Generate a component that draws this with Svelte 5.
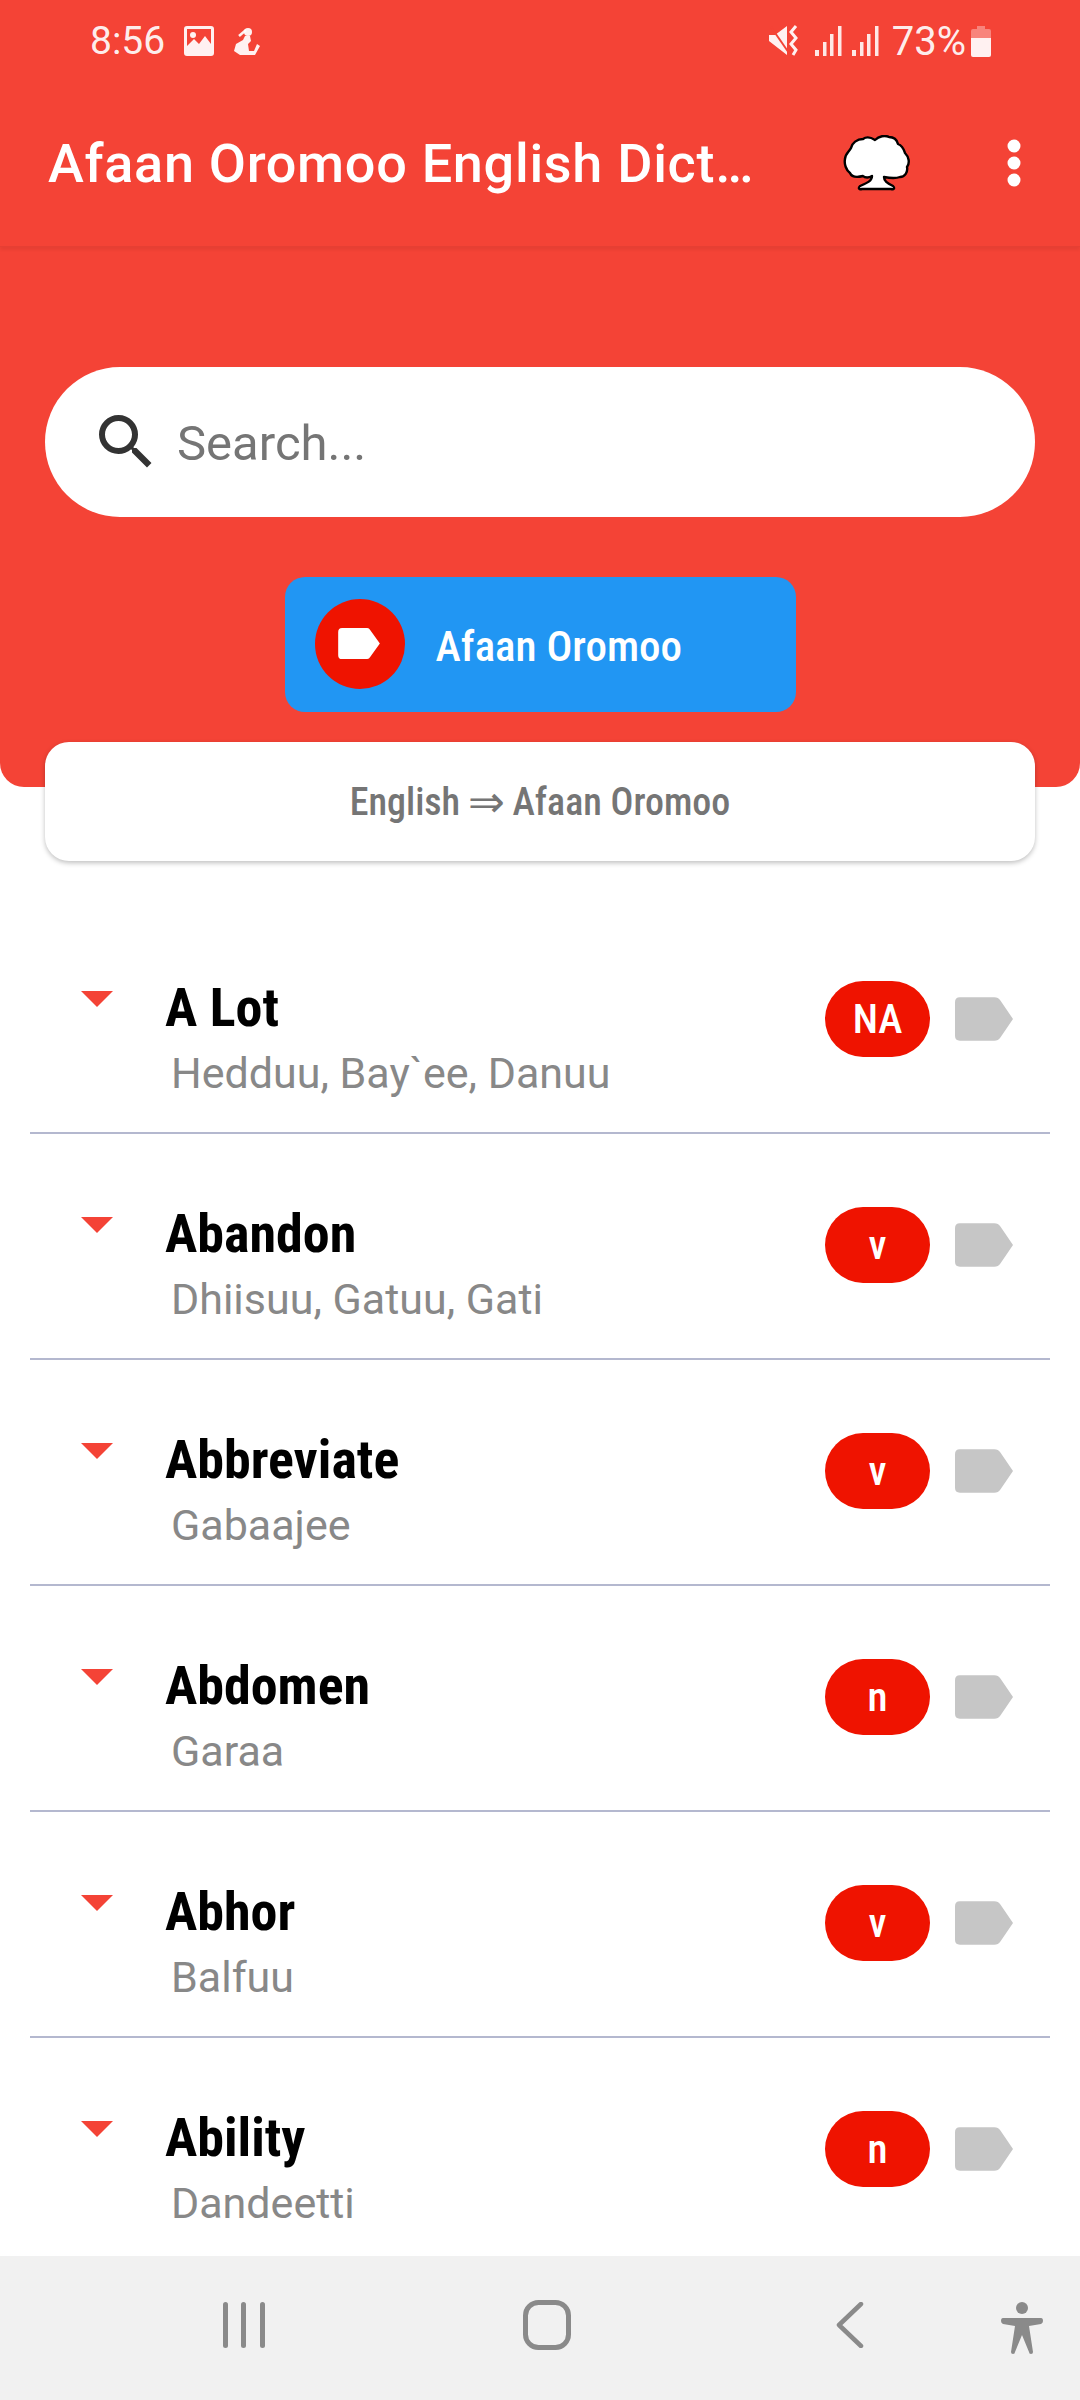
<script>
  const words = [
    { word: 'A Lot', meaning: 'Hedduu, Bay`ee, Danuu', type: 'NA' },
    { word: 'Abandon', meaning: 'Dhiisuu, Gatuu, Gati', type: 'v' },
    { word: 'Abbreviate', meaning: 'Gabaajee', type: 'v' },
    { word: 'Abdomen', meaning: 'Garaa', type: 'n' },
    { word: 'Abhor', meaning: 'Balfuu', type: 'v' },
    { word: 'Ability', meaning: 'Dandeetti', type: 'n' }
  ];
  const tag = 'M5 0H40Q44 0 46 3L59 22L46 41Q44 44 40 44H5Q0 44 0 39V5Q0 0 5 0Z';
</script>

<div class="screen">
  <header class="top">
    <div class="status">
      <div class="status-left">
        <span class="clock">8:56</span>
        <svg class="st-img" viewBox="0 0 30 30">
          <path fill="#fff" fill-opacity=".93" fill-rule="evenodd" d="M3 0H27Q30 0 30 3V27Q30 30 27 30H3Q0 30 0 27V3Q0 0 3 0ZM3 3V20L10 13L15 18L21 10L27 18V3Z"/>
          <circle cx="9" cy="9" r="3" fill="#fff" fill-opacity=".93"/>
        </svg>
        <svg class="st-run" viewBox="0 0 26 28">
          <circle cx="14" cy="5" r="4" fill="#fff" fill-opacity=".93"/>
          <path d="M12 3L5 9" stroke="#fff" stroke-opacity=".93" stroke-width="2.5"/>
          <path fill="#fff" fill-opacity=".93" d="M11 9H16L17 14L14 17L15 24L20 24L23 17L26 19L21 28H6L0 24L2 17L9 13Z"/>
        </svg>
      </div>
      <div class="status-right">
        <svg class="st-mute" viewBox="0 0 32 32">
          <path fill="#fff" fill-opacity=".93" d="M0 10H6L18 1V30L0 16Z"/>
          <path stroke="#f44336" stroke-width="2" d="M2 2L20 28"/>
          <path fill="none" stroke="#fff" stroke-opacity=".93" stroke-width="3" d="M27 1L22 7L27 13L22 19L27 25L24 30"/>
        </svg>
        <svg class="st-sig" viewBox="0 0 28 30">
          <g fill="#fff" fill-opacity=".88"><rect x="0" y="24" width="4" height="6"/><rect x="8" y="16" width="3.5" height="14"/><rect x="15" y="8" width="3.5" height="22"/><rect x="23" y="0" width="3.5" height="30"/></g>
        </svg>
        <svg class="st-sig" viewBox="0 0 28 30">
          <g fill="#fff" fill-opacity=".88"><rect x="0" y="24" width="4" height="6"/><rect x="8" y="16" width="3.5" height="14"/><rect x="15" y="8" width="3.5" height="22"/><rect x="23" y="0" width="3.5" height="30"/></g>
        </svg>
        <span class="pct">73%</span>
        <svg class="st-batt" viewBox="0 0 20 31">
          <path fill="#fff" fill-opacity=".35" d="M6 0H14V3H18Q20 3 20 5V12H0V5Q0 3 2 3H6Z"/>
          <path fill="#fff" fill-opacity=".93" d="M0 12H20V29Q20 31 18 31H2Q0 31 0 29Z"/>
        </svg>
      </div>
    </div>

    <div class="toolbar">
      <h1>Afaan Oromoo English Dict…</h1>
      <svg class="tree" viewBox="0 0 68 56">
        <path fill="#fff" stroke="#000" stroke-width="2.4" stroke-linejoin="round" d="M29 41C26 43 22 43 20 41C16 42 9 43 7 38C3 35 1 29 2 24C2 19 6 17 8 13C9 8 14 4 20 4C24 1 29 3 32 5C36 1 42 0 46 2C51 2 54 5 55 9C60 11 61 15 62 18C66 22 67 28 64 32C65 37 62 42 57 42C52 44 46 43 41 42C41 46 44 48 50 51C52 53 51 55 48 54H19C16 55 15 53 17 51C24 48 29 46 29 41Z"/>
      </svg>
      <svg class="more" viewBox="0 0 14 48">
        <circle cx="7" cy="7" r="6.5" fill="#fff"/><circle cx="7" cy="24" r="6.5" fill="#fff"/><circle cx="7" cy="41" r="6.5" fill="#fff"/>
      </svg>
    </div>

    <div class="search">
      <svg class="lens" viewBox="0 0 24 24">
        <path fill="#333" d="M15.5 14h-.79l-.28-.27A6.47 6.47 0 0 0 16 9.5 6.5 6.5 0 1 0 9.5 16c1.61 0 3.09-.59 4.23-1.57l.27.28v.79l5 4.99L20.49 19l-4.99-5zm-6 0C7.01 14 5 11.99 5 9.5S7.01 5 9.5 5 14 7.01 14 9.5 11.99 14 9.5 14z"/>
      </svg>
      <span class="placeholder">Search...</span>
    </div>

    <button class="lang">
      <span class="lang-dot">
        <svg viewBox="0 0 44 32" class="lang-tag"><path fill="#fff" d="M4 0H30Q32 0 33 2L43 16L33 30Q32 32 30 32H4Q0 32 0 28V4Q0 0 4 0Z"/></svg>
      </span>
      <span class="lang-name">Afaan Oromoo</span>
    </button>
  </header>

  <div class="direction">English <span class="dir-arrow">⇒</span> Afaan Oromoo</div>

  <ul class="list">
    {#each words as w}
      <li class="row">
        <span class="arrow"></span>
        <div class="texts">
          <div class="word">{w.word}</div>
          <div class="meaning">{w.meaning}</div>
        </div>
        <span class="pill">{w.type}</span>
        <svg class="row-tag" viewBox="0 0 59 44"><path fill="#c6c6c6" d={tag}/></svg>
      </li>
    {/each}
  </ul>

  <nav class="nav">
    <svg class="nav-recents" viewBox="0 0 42 46">
      <g fill="#8a8a8a"><rect x="0" y="0" width="5" height="46" rx="2.5"/><rect x="18" y="0" width="5" height="46" rx="2.5"/><rect x="37" y="0" width="5" height="46" rx="2.5"/></g>
    </svg>
    <svg class="nav-home" viewBox="0 0 48 50">
      <rect x="2.5" y="2.5" width="43" height="45" rx="13" fill="none" stroke="#8a8a8a" stroke-width="5"/>
    </svg>
    <svg class="nav-back" viewBox="0 0 28 46">
      <path d="M25 2L3 23L25 44" fill="none" stroke="#8a8a8a" stroke-width="4.5" stroke-linecap="round" stroke-linejoin="round"/>
    </svg>
    <svg class="nav-person" viewBox="0 0 42 52">
      <circle cx="21" cy="6" r="6" fill="#8a8a8a"/>
      <path fill="#8a8a8a" d="M2 16H40Q42 16 42 19Q42 21 40 22L28 24L32 50Q32 52 30 52Q28 52 28 50L21 33L14 50Q14 52 12 52Q10 52 10 50L14 24L2 22Q0 21 0 19Q0 16 2 16Z"/>
    </svg>
  </nav>
</div>

<style>
  :global(body) { margin: 0; background: #fff; }

  .screen {
    width: 1080px; height: 2400px; display: flex; flex-direction: column;
    overflow: hidden; background: #fff; font-family: Roboto, "Noto Sans", sans-serif;
  }

  .top {
    height: 787px; box-sizing: border-box; background: #f44336;
    border-radius: 0 0 24px 24px; display: flex; flex-direction: column; flex: none;
  }

  .status {
    height: 62px; padding: 20px 89px 0 90px; box-sizing: border-box;
    display: flex; justify-content: space-between; align-items: center;
    color: rgba(255,255,255,.93);
  }
  .status-left, .status-right { display: flex; align-items: center; }
  .clock { font-size: 39px; margin-right: 19px; }
  .st-img { width: 30px; height: 30px; margin-right: 20px; }
  .st-run { width: 26px; height: 28px; }
  .st-mute { width: 32px; height: 32px; margin-right: 14px; }
  .st-sig { width: 28px; height: 30px; margin-right: 9px; }
  .pct { font-size: 40px; margin: 0 5px 0 3px; }
  .st-batt { width: 20px; height: 31px; }

  .toolbar {
    height: 185px; box-sizing: border-box; padding: 18px 0 0 48px;
    display: flex; align-items: center; box-shadow: 0 3px 3px rgba(0,0,0,.06);
    border-bottom: 1px solid #e63f33;
  }
  h1 {
    margin: 0; width: 795px; color: #fff; font-size: 54px; font-weight: 500;
    white-space: nowrap; letter-spacing: .7px;
  }
  .tree { width: 68px; height: 56px; margin-right: 96px; }
  .more { width: 14px; height: 48px; }

  .search {
    margin: 120px 45px 0; height: 150px; background: #fff; border-radius: 75px;
    display: flex; align-items: center; padding-left: 50px; flex: none;
  }
  .lens { width: 72px; height: 72px; margin-right: 15px; margin-left: -5px; }
  .placeholder { font-size: 49px; color: #757575; padding-top: 3px; }

  .lang {
    align-self: center; margin-top: 60px; width: 511px; height: 135px; border: 0; flex: none;
    background: #2196f3; border-radius: 20px; display: flex; align-items: center;
    padding: 0 0 0 30px; font-family: inherit;
  }
  .lang-dot {
    width: 90px; height: 90px; border-radius: 50%; background: #ef1300; margin-bottom: 2px;
    display: flex; align-items: center; justify-content: center; margin-right: 31px;
  }
  .lang-tag { width: 43px; height: 31px; }
  .lang-name {
    font-family: "Roboto Condensed", "Liberation Sans Narrow", Roboto, sans-serif;
    font-stretch: condensed; font-size: 43px; font-weight: 500; color: #fff; padding-top: 2px;
  }

  .direction {
    margin: -45px 45px 0; height: 119px; background: #fff; border-radius: 24px; flex: none;
    box-shadow: 0 2px 5px rgba(0,0,0,.25); display: flex; align-items: center; justify-content: center;
    font-family: "Roboto Condensed", "Liberation Sans Narrow", Roboto, sans-serif;
    font-stretch: condensed; font-size: 38px; font-weight: 500; color: #757575; white-space: pre;
  }
  .dir-arrow { font-family: "DejaVu Sans", sans-serif; font-weight: 400; font-stretch: normal; font-size: 44px; line-height: 1; margin: 0 -1px; }

  .list { list-style: none; margin: 47px 30px 0; padding: 0; flex: 1; overflow: hidden; }
  .row {
    height: 226px; box-sizing: border-box; border-bottom: 2px solid #b4b8cf;
    display: flex; align-items: flex-start; padding-top: 71px; position: relative;
  }
  .arrow {
    width: 0; height: 0; margin: 12px 0 0 51px; border-style: solid;
    border-width: 16px 16px 0; border-color: #f44336 transparent transparent;
  }
  .texts { margin-left: 52px; flex: 1; }
  .word {
    font-family: "Roboto Condensed", "Liberation Sans Narrow", Roboto, sans-serif;
    font-stretch: condensed; font-size: 54px; font-weight: 700; color: #000; line-height: 58px;
  }
  .meaning { font-size: 43px; color: #888; line-height: 50px; margin: 11px 0 0 6px; }
  .pill {
    width: 105px; height: 76px; border-radius: 38px; background: #ef1300; color: #fff; margin-top: 2px;
    display: flex; align-items: center; justify-content: center; margin-right: 25px;
    font-family: "Roboto Condensed", "Liberation Sans Narrow", Roboto, sans-serif;
    font-stretch: condensed; font-size: 41px; font-weight: 500;
  }
  .row-tag { width: 58px; height: 44px; margin: 18px 37px 0 0; }

  .nav {
    height: 144px; box-sizing: border-box; padding-bottom: 6px; flex: none; background: #f1f1f1;
    display: grid; grid-template-columns: 223px 42px 258px 48px 265px 28px 137px 42px; align-items: center;
  }
  .nav-recents { grid-column: 2; width: 42px; height: 46px; }
  .nav-home { grid-column: 4; width: 48px; height: 50px; }
  .nav-back { grid-column: 6; width: 28px; height: 46px; }
  .nav-person { grid-column: 8; width: 42px; height: 52px; margin-top: 6px; }
</style>
